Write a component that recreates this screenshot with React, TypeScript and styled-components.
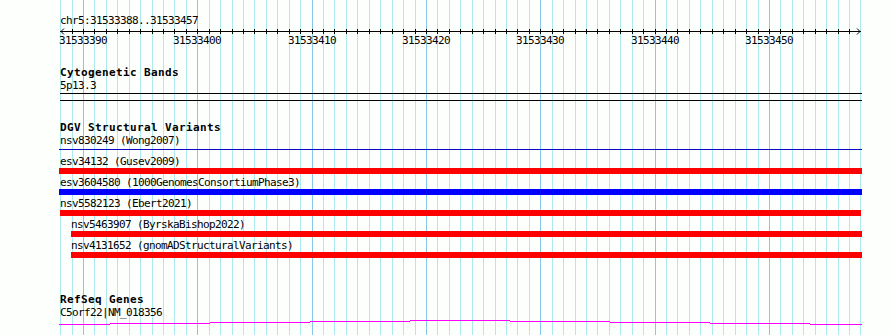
import React from "react";
import styled, { createGlobalStyle } from "styled-components";

const GlobalStyle = createGlobalStyle`
  html, body {
    margin: 0;
    padding: 0;
    background: #fdfffd;
  }
`;

// view: chr5:31533388..31533457, one grid line per base
const PX_PER_BP = 11.433;
const ORIGIN = 60.6;
const COLUMN_LEFT = 60;
const gridX = (i: number) => Math.floor(ORIGIN + PX_PER_BP * i);

const Page = styled.div`
  position: relative;
  width: 890px;
  height: 335px;
  overflow: hidden;
  background: #fdfffd;
  color: #000;
  font-family: "DejaVu Sans Mono", "Liberation Mono", monospace;
  font-size: 11px;
  letter-spacing: -0.62px;
  line-height: 12px;
`;

const GridLayer = styled.div`
  position: absolute;
  inset: 0;
  z-index: 0;
  pointer-events: none;
`;

const GridLine = styled.div<{ $major?: boolean }>`
  position: absolute;
  top: 0;
  bottom: 0;
  width: 1px;
  background: ${(p) => (p.$major ? "#86c8ea" : "#ade9ee")};
`;

const Column = styled.div`
  position: relative;
  z-index: 1;
  margin-left: ${COLUMN_LEFT}px;
  width: 802px;
  display: flex;
  flex-direction: column;
`;

const Location = styled.div`
  margin-top: 15px;
  height: 12px;
  white-space: nowrap;
`;

const Scale = styled.svg`
  display: block;
  width: 802px;
  height: 8px;
`;

const TickLabels = styled.div`
  position: relative;
  height: 12px;
`;

const TickLabel = styled.span`
  position: absolute;
  top: 0;
  white-space: nowrap;
`;

const Track = styled.section<{ $gap: number }>`
  margin-top: ${(p) => p.$gap}px;
  display: flex;
  flex-direction: column;
`;

const TrackLabel = styled.h2`
  margin: 0;
  height: 12px;
  font-size: 11px;
  font-weight: bold;
  letter-spacing: 0.38px;
  line-height: 12px;
  white-space: nowrap;
`;

const Name = styled.div<{ $top?: number; $indent?: number }>`
  margin-top: ${(p) => p.$top ?? 0}px;
  padding-left: ${(p) => p.$indent ?? 0}px;
  height: 12px;
  white-space: nowrap;
`;

const Band = styled.div`
  margin-top: 1px;
  height: 6px;
  border-top: 1px solid #000;
  border-bottom: 1px solid #000;
`;

const FeatureRow = styled.div`
  display: flex;
  flex-direction: column;
`;

const Bar = styled.div<{ $color: string; $thin?: boolean; $left: number; $right: number }>`
  margin-left: ${(p) => p.$left}px;
  margin-right: ${(p) => p.$right}px;
  margin-top: ${(p) => (p.$thin ? 2 : 0)}px;
  margin-bottom: ${(p) => (p.$thin ? 6 : 3)}px;
  height: ${(p) => (p.$thin ? 1 : 6)}px;
  background: ${(p) => p.$color};
`;

const GeneGlyph = styled.svg`
  display: block;
  margin-left: -1px;
  width: 804px;
  height: 9px;
`;

type Feature = {
  name: string;
  color: string;
  thin?: boolean;
  left: number;
  right: number;
  indent?: number;
};

const features: Feature[] = [
  { name: "nsv830249 (Wong2007)", color: "#0a0ac4", thin: true, left: -1, right: 0 },
  { name: "esv34132 (Gusev2009)", color: "#ff0000", left: -1, right: 0 },
  { name: "esv3604580 (1000GenomesConsortiumPhase3)", color: "#0000ff", left: -1, right: 0 },
  { name: "nsv5582123 (Ebert2021)", color: "#ff0000", left: 0, right: 1 },
  { name: "nsv5463907 (ByrskaBishop2022)", color: "#ff0000", left: 11, right: 0, indent: 11 },
  { name: "nsv4131652 (gnomADStructuralVariants)", color: "#ff0000", left: 11, right: 0, indent: 11 },
];

// intron hat of the gene model, drawn as 1px steps
const GLYPH_TOP = 319;
const hatSteps: [number, number, number][] = [
  [59, 110, 324],
  [110, 210, 323],
  [210, 310, 322],
  [310, 410, 321],
  [410, 510, 320],
  [510, 610, 321],
  [610, 710, 322],
  [710, 810, 323],
  [810, 862, 324],
];

function Ruler() {
  const ticks = Array.from({ length: 69 }, (_, k) => gridX(k + 1) - COLUMN_LEFT + 0.5);
  const labels = [0, 1, 2, 3, 4, 5, 6].map((n) => ({
    text: String(31533390 + n * 10),
    x: gridX(2 + n * 10) - COLUMN_LEFT - 24,
  }));

  return (
    <>
      <Location>chr5:31533388..31533457</Location>
      <Scale viewBox="0 0 802 8">
        <g stroke="#000" strokeWidth={1} fill="none" shapeRendering="crispEdges">
          <line x1={0} y1={4.5} x2={801} y2={4.5} />
          {ticks.map((x) => (
            <line key={x} x1={x} y1={2} x2={x} y2={7} />
          ))}
        </g>
        <g stroke="#000" strokeWidth={1} fill="none">
          <path d="M4,1.5 L1,4.5 L4,7.5" />
          <path d="M797,1.5 L800,4.5 L797,7.5" />
        </g>
      </Scale>
      <TickLabels>
        {labels.map((l) => (
          <TickLabel key={l.text} style={{ left: l.x }}>
            {l.text}
          </TickLabel>
        ))}
      </TickLabels>
    </>
  );
}

export default function App() {
  const lines = Array.from({ length: 71 }, (_, i) => i);
  const hatPath = hatSteps
    .map(([a, b, y]) => `M${a - 59},${y - GLYPH_TOP + 0.5}H${b - 59}`)
    .join("");

  return (
    <Page>
      <GlobalStyle />
      <GridLayer>
        {lines.map((i) => (
          <GridLine key={i} $major={i % 10 === 2} style={{ left: gridX(i) }} />
        ))}
      </GridLayer>
      <Column>
        <Ruler />

        <Track $gap={20}>
          <TrackLabel>Cytogenetic Bands</TrackLabel>
          <Name $top={1}>5p13.3</Name>
          <Band />
        </Track>

        <Track $gap={21}>
          <TrackLabel>DGV Structural Variants</TrackLabel>
          {features.map((f, idx) => (
            <FeatureRow key={f.name}>
              <Name $top={idx === 0 ? 1 : 0} $indent={f.indent}>
                {f.name}
              </Name>
              <Bar $color={f.color} $thin={f.thin} $left={f.left} $right={f.right} />
            </FeatureRow>
          ))}
        </Track>

        <Track $gap={33}>
          <TrackLabel>RefSeq Genes</TrackLabel>
          <Name $top={1}>C5orf22|NM_018356</Name>
          <GeneGlyph viewBox="0 0 804 9">
            <path d={hatPath} stroke="#ff00ff" strokeWidth={1} fill="none" shapeRendering="crispEdges" />
          </GeneGlyph>
        </Track>
      </Column>
    </Page>
  );
}
